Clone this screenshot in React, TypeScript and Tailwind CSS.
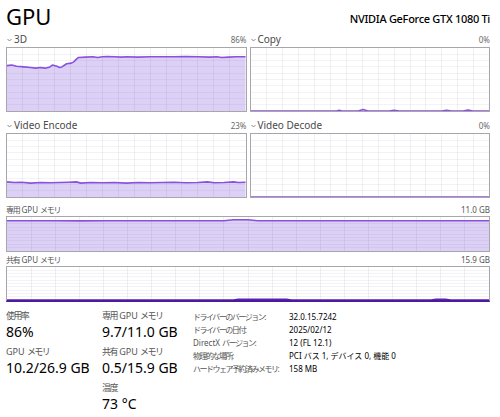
import type { ReactNode } from "react";

type Pt = [number, number];

const FONT = "font-['Noto_Sans','Noto_Sans_CJK_JP',sans-serif]";

/** usage series, x and y in percent (y = usage, 0 bottom). */
const LOAD_3D: Pt[] = [
  [0, 72], [2, 73], [4, 71], [7, 70], [10, 69], [12, 68], [14, 69], [16, 68], [18, 70],
  [19, 73], [21, 71], [22, 69], [23, 70], [25, 75], [27, 76], [28, 78], [29, 82], [30, 85],
  [33, 85.5], [36, 86], [38, 85], [40, 86], [42, 86.5], [45, 86], [48, 85.5], [50, 86],
  [55, 85.5], [60, 86], [65, 86], [70, 86], [75, 86.5], [80, 86], [85, 85.5], [88, 86],
  [90, 85], [93, 85.5], [96, 86], [100, 86],
];
const LOAD_COPY: Pt[] = [
  [0, 0], [36, 0], [37, 1.2], [38, 0], [45, 0], [47, 2.5], [49, 0], [58, 0], [60, 1], [62, 0],
  [80, 0], [82, 1.2], [84, 0], [89, 0], [91, 1.5], [93, 0], [100, 0],
];
const LOAD_ENC: Pt[] = [
  [0, 24], [3, 23], [6, 23.5], [10, 22], [14, 23], [18, 22.5], [22, 23], [26, 23.5], [29, 24],
  [31, 22], [35, 23], [40, 22.5], [45, 23], [50, 22], [55, 23], [60, 22.5], [65, 23], [70, 23.5],
  [75, 22.5], [80, 23], [84, 24], [87, 22.5], [91, 23], [95, 24], [97, 23], [100, 23.5],
];
const LOAD_DEC: Pt[] = [[0, 0], [100, 0]];
const MEM_DED: Pt[] = [
  [0, 89], [10, 89], [15, 88.5], [20, 89], [45, 89], [47, 92], [50, 92], [52, 89], [100, 89],
];
const MEM_SHR: Pt[] = [
  [0, 0], [47, 0], [48, 2.5], [58, 2.5], [59, 0], [88, 0], [89, 2.5], [91, 2.5], [92, 0], [100, 0],
];

/** Squeezes the Japanese runs of a label only, so Latin keeps its spacing. */
function Jp({ text, tight }: { text: string; tight: string }) {
  return (
    <>
      {text.split(/([\u3000-\u9fff\uff00-\uffef:]+)/).map((part, i) =>
        /[\u3000-\u9fff\uff00-\uffef]/.test(part) ? (
          <span key={i} className={tight}>
            {part}
          </span>
        ) : (
          part
        )
      )}
    </>
  );
}

function Chart({
  data,
  cols,
  className,
  strong,
}: {
  data: Pt[];
  cols: number;
  className: string;
  strong?: boolean;
}) {
  const pts = data.map(([x, v]) => `${x},${100 - v}`).join(" ");
  const area = `M0,100 L${data.map(([x, v]) => `${x},${100 - v}`).join(" L")} L100,100 Z`;
  return (
    <div className={`relative border border-[#a8a5ad] bg-white ${className}`}>
      <svg className="absolute inset-0 h-full w-full" viewBox="0 0 100 100" preserveAspectRatio="none">
        <path d={area} fill="#ddd0f6" />
        {Array.from({ length: 9 }, (_, i) => (
          <line
            key={`h${i}`}
            x1={0}
            x2={100}
            y1={(i + 1) * 10}
            y2={(i + 1) * 10}
            stroke="rgba(90,80,110,0.07)"
            strokeWidth={1}
            vectorEffect="non-scaling-stroke"
            shapeRendering="crispEdges"
          />
        ))}
        {Array.from({ length: cols - 1 }, (_, i) => (
          <line
            key={`v${i}`}
            x1={((i + 1) * 100) / cols}
            x2={((i + 1) * 100) / cols}
            y1={0}
            y2={100}
            stroke="rgba(90,80,110,0.09)"
            strokeWidth={1}
            vectorEffect="non-scaling-stroke"
            shapeRendering="crispEdges"
          />
        ))}
        <polyline
          points={pts}
          fill="none"
          stroke={strong ? "#5a22b0" : "#8a52dc"}
          strokeWidth={1.6}
          vectorEffect="non-scaling-stroke"
          strokeLinejoin="round"
        />
      </svg>
    </div>
  );
}

function Chevron() {
  return (
    <svg width="5" height="4" viewBox="0 0 5 4" className="mr-[2px] shrink-0">
      <path d="M0.5 1 L2.5 3 L4.5 1" fill="none" stroke="#8a8a8a" strokeWidth="1" />
    </svg>
  );
}

function EngineLabel({ name, pct }: { name: string; pct: string }) {
  return (
    <div className="flex h-[15px] items-center justify-between">
      <div className="flex items-center pl-[1px] text-[10px] text-[#4a4a4a]">
        <Chevron />
        {name}
      </div>
      <span className="text-[8px] text-[#6a6a6a]">{pct}</span>
    </div>
  );
}

function MemLabel({ name, value }: { name: string; value: string }) {
  return (
    <div className="flex h-[12px] items-center justify-between text-[8px] text-[#555]">
      <span>
        <Jp text={name} tight="tracking-[-1.3px]" />
      </span>
      <span>{value}</span>
    </div>
  );
}

function Stat({ label, value }: { label: string; value: ReactNode }) {
  return (
    <div>
      <div className="text-[9px] leading-[12px] text-[#555]">
        <Jp text={label} tight="tracking-[-1.6px]" />
      </div>
      <div className="text-[14px] leading-[20px] text-black">{value}</div>
    </div>
  );
}

const DETAILS: [string, string][] = [
  ["ドライバーのバージョン:", "32.0.15.7242"],
  ["ドライバーの日付:", "2025/02/12"],
  ["DirectX バージョン:", "12 (FL 12.1)"],
  ["物理的な場所:", "PCI バス 1, デバイス 0, 機能 0"],
  ["ハードウェア予約済みメモリ:", "158 MB"],
];

export default function App() {
  return (
    <div className={`h-[417px] w-[500px] overflow-hidden bg-white pl-[6px] pr-[10px] ${FONT}`}>
      {/* Header */}
      <div className="flex h-[32px] items-start justify-between">
        <h1 className="mt-[2px] text-[22px] leading-[28px] text-black">GPU</h1>
        <div className="mt-[12px] text-[11px] font-medium leading-[14px] tracking-[-0.3px] text-black">
          NVIDIA GeForce GTX 1080 Ti
        </div>
      </div>

      {/* Engine graphs */}
      <div className="grid grid-cols-2 gap-x-[3px]">
        <div>
          <EngineLabel name="3D" pct="86%" />
          <Chart data={LOAD_3D} cols={15} className="h-[65px]" />
        </div>
        <div>
          <EngineLabel name="Copy" pct="0%" />
          <Chart data={LOAD_COPY} cols={15} className="h-[65px]" />
        </div>
        <div className="mt-[6px]">
          <EngineLabel name="Video Encode" pct="23%" />
          <Chart data={LOAD_ENC} cols={15} className="h-[65px]" />
        </div>
        <div className="mt-[6px]">
          <EngineLabel name="Video Decode" pct="0%" />
          <Chart data={LOAD_DEC} cols={15} className="h-[65px]" />
        </div>
      </div>

      {/* Memory graphs */}
      <div className="mt-[6px]">
        <MemLabel name="専用 GPU メモリ" value="11.0 GB" />
        <Chart data={MEM_DED} cols={20} className="h-[36px]" />
      </div>
      <div className="mt-[2px]">
        <MemLabel name="共有 GPU メモリ" value="15.9 GB" />
        <Chart data={MEM_SHR} cols={20} className="h-[36px] border-b-2 border-b-[#4b1aa0]" strong />
      </div>

      {/* Stats */}
      <div className="mt-[8px] flex">
        <div className="flex w-[96px] flex-col gap-[4px]">
          <Stat label="使用率" value="86%" />
          <Stat label="GPU メモリ" value="10.2/26.9 GB" />
        </div>
        <div className="flex w-[91px] flex-col gap-[4px]">
          <Stat label="専用 GPU メモリ" value="9.7/11.0 GB" />
          <Stat label="共有 GPU メモリ" value="0.5/15.9 GB" />
          <Stat label="温度" value="73 °C" />
        </div>
        <div className="grid grid-cols-[96px_1fr] content-start text-[8px] leading-[13px]">
          {DETAILS.map(([k, v]) => (
            <div key={k} className="contents">
              <span className="whitespace-nowrap text-[#555]">
                <Jp text={k} tight="tracking-[-1.5px]" />
              </span>
              <span className="whitespace-nowrap text-black">{v}</span>
            </div>
          ))}
        </div>
      </div>
    </div>
  );
}
